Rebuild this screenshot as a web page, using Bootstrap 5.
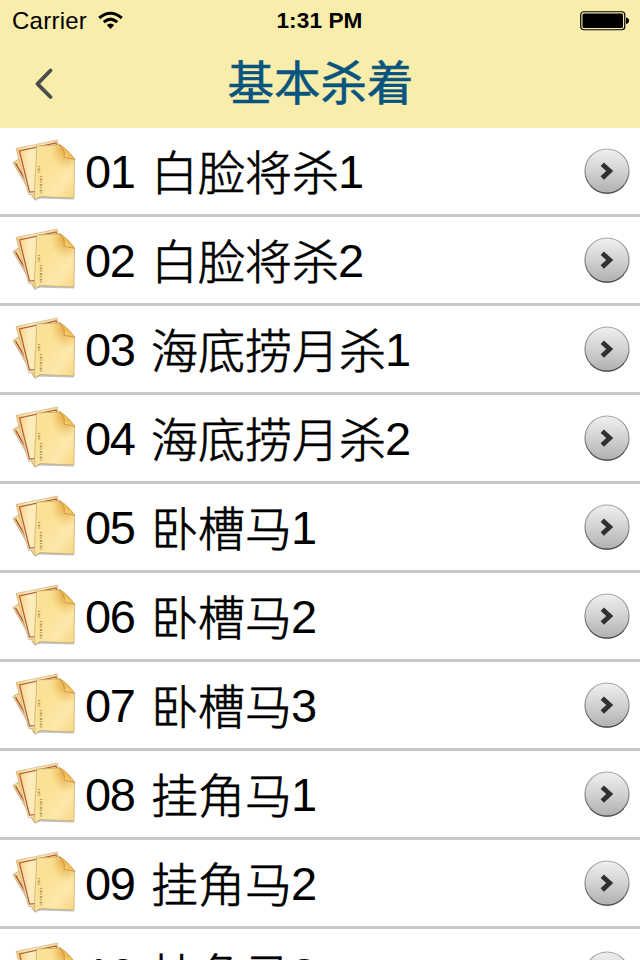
<!DOCTYPE html>
<html lang="zh-CN">
<head>
  <meta charset="UTF-8">
  <meta name="viewport" content="width=device-width, initial-scale=1.0">
  <title>基本杀着</title>
  <link href="https://cdn.jsdelivr.net/npm/bootstrap@5.3.0/dist/css/bootstrap.min.css" rel="stylesheet">
  <style>
    :root {
      --bar-color: #f9edac;
      --title-color: #07547f;
      --line-color: #c8c8c8;
    }

    body {
      font-family: "Liberation Sans", "Noto Sans CJK SC", sans-serif;
      background: #fff;
      color: #000;
      height: 960px;
      overflow: hidden;
    }

    /* Header */
    .top-bar {
      background: var(--bar-color);
      height: 128px;
    }

    .status-bar {
      height: 40px;
      padding: 1px 10px 0 12px;
      font-size: 24px;
      line-height: 39px;
    }

    .carrier-name {
      letter-spacing: .25px;
    }

    .clock {
      margin-right: 3px;
      font-size: 22.6px;
      line-height: 40px;
      letter-spacing: .1px;
    }

    .title-bar {
      height: 88px;
    }

    .page-title {
      padding-left: 1px;
      font-size: 46.5px;
      font-weight: 400;
      line-height: 92px;
      color: var(--title-color);
      -webkit-text-stroke: .6px var(--title-color);
    }

    .side-cell {
      width: 140px;
    }

    .back-btn {
      padding-left: 34px;
    }

    /* List */
    .lesson-list > .lesson {
      height: 89px;
      padding: 0 10px 0 11px;
      border: 0;
      border-bottom: 3px solid var(--line-color);
      color: #000;
      background: #fff;
    }

    .lesson-name {
      margin-left: 8px;
      padding-top: 2px;
      font-size: 47px;
      line-height: 84px;
      white-space: pre;
      word-spacing: 3.5px;
    }

    .lesson-no {
      letter-spacing: -1.4px;
    }

    .lesson-han {
      font-weight: 300;
      line-height: 1;
      vertical-align: -2px;
      -webkit-text-stroke: .7px #000;
    }

    .lesson-end {
      margin-left: -1px;
    }
  </style>
</head>

<body>
  <!-- Shared icons -->
  <svg width="0" height="0" class="position-absolute" aria-hidden="true">
    <defs>
      <linearGradient id="paperFill" x1="0" y1="0" x2="1" y2="1">
        <stop offset="0" stop-color="#f9e19a"/>
        <stop offset=".35" stop-color="#fbe193"/>
        <stop offset=".7" stop-color="#fde8ac"/>
        <stop offset="1" stop-color="#f8d47e"/>
      </linearGradient>
      <linearGradient id="edgeFill" x1="0" y1="0" x2="1" y2="0">
        <stop offset="0" stop-color="#f6ca74"/>
        <stop offset=".3" stop-color="#fdedbd"/>
        <stop offset="1" stop-color="#f6d788"/>
      </linearGradient>
      <linearGradient id="foldShade" x1="0" y1="1" x2="1" y2="0">
        <stop offset="0" stop-color="#fff0b4"/>
        <stop offset=".5" stop-color="#f2bd50"/>
        <stop offset="1" stop-color="#cf8424"/>
      </linearGradient>
      <radialGradient id="cornerShade" cx=".8" cy=".06" r=".42">
        <stop offset="0" stop-color="#d0851c" stop-opacity=".85"/>
        <stop offset="1" stop-color="#eebb50" stop-opacity="0"/>
      </radialGradient>
      <linearGradient id="buttonFill" x1="0" y1="0" x2="0" y2="1">
        <stop offset="0" stop-color="#f0f0f0"/>
        <stop offset=".5" stop-color="#d2d2d2"/>
        <stop offset="1" stop-color="#b0b0b0"/>
      </linearGradient>
      <linearGradient id="buttonRim" x1="0" y1="0" x2="0" y2="1">
        <stop offset="0" stop-color="#a5a5a5"/>
        <stop offset=".6" stop-color="#858585"/>
        <stop offset="1" stop-color="#444"/>
      </linearGradient>
    </defs>
    <symbol id="papers" viewBox="0 0 66 64">
      <path d="M3 24 24 62 29 59 20 16Z" fill="#77777a" opacity=".35"/>
      <path d="M2 23.500 8 20 28 57 23 60Z" fill="#f8dc8d" stroke="#a99a80" stroke-width=".7"/>
      <path d="M4.500 24 16 44" stroke="#a84535" stroke-width="1.300" fill="none"/>
      <path d="M5 9.500 46.500 1 52 52 17.500 55.500Z" fill="url(#edgeFill)" stroke="#c9b28c" stroke-width=".7"/>
      <path d="M45.500 6 45 4 8.500 12 18.500 53 25 52.500" fill="none" stroke="#b05a40" stroke-width="1.200"/>
      <path d="M24 59.500 63 60.500 63 57 26 55Z" fill="#777" opacity=".45"/>
      <path d="M25.500 7 49 6 63.500 20.500 63 59 29 57.500 24 61C22.500 44 26 25 25.500 7Z" fill="url(#paperFill)" stroke="#c0a868" stroke-width=".7"/>
      <path d="M25.500 7 49 6 63.500 20.500 63 59 29 57.500 24 61C22.500 44 26 25 25.500 7Z" fill="url(#cornerShade)"/>
      <path d="M48 5.500C54 8 60 15 64 20.500L53 18C54.500 13 52 9 48 5.500Z" fill="url(#foldShade)" stroke="#b87b27" stroke-width=".6"/>
      <path d="M28 27v7m2 3v19" fill="none" stroke="#907a45" stroke-width="2.400" stroke-dasharray="1 1.500 2 1" opacity=".65"/>
    </symbol>
    <symbol id="more" viewBox="0 0 46 48">
      <circle cx="23" cy="24" r="22" fill="url(#buttonFill)" stroke="url(#buttonRim)" stroke-width="1.200"/>
      <path d="M6 38.500A22.300 22.300 0 0 0 40 38.500" fill="none" stroke="#4c4c4c" stroke-width=".9"/>
      <path d="M18.300 17.300 25.700 24 18.300 31" fill="none" stroke="#303032" stroke-width="4.800" stroke-linejoin="miter"/>
    </symbol>
  </svg>

  <header class="top-bar">
    <div class="status-bar d-flex justify-content-between">
      <div class="side-cell d-flex align-items-center">
        <span class="carrier-name">Carrier</span>
        <svg class="ms-2 flex-shrink-0" width="28" height="20" viewBox="0 0 28 20">
          <g fill="none" stroke="#000" stroke-width="3">
            <path d="M4.200 7Q15.500 -2.600 26.800 7"/>
            <path d="M8.800 11.200Q15.500 5 22.200 11.200"/>
          </g>
          <path d="M11.800 14Q15.500 11 19.200 14L15.500 18Z"/>
        </svg>
      </div>
      <strong class="clock">1:31 PM</strong>
      <div class="side-cell d-flex align-items-center justify-content-end">
        <svg width="50" height="20" viewBox="0 0 50 20">
          <rect x=".75" y=".75" width="44" height="18" rx="3" fill="none" stroke="#000" stroke-width="1.200"/>
          <rect x="2.500" y="2.500" width="40.500" height="14.500" rx="1.500"/>
          <path d="M46 6.500Q49 7 49 9.750T46 13Z"/>
        </svg>
      </div>
    </div>
    <div class="title-bar d-flex align-items-center justify-content-between">
      <a href="#" class="side-cell back-btn" aria-label="Back">
        <svg class="d-block" width="20" height="32" viewBox="0 0 20 32">
          <path d="M16.500 2.500 3.500 15.800 16.500 29" fill="none" stroke="#4c4c4c" stroke-width="3.800" stroke-linecap="round" stroke-linejoin="round"/>
        </svg>
      </a>
      <h1 class="page-title mb-0">基本杀着</h1>
      <div class="side-cell"></div>
    </div>
  </header>

  <main class="list-group list-group-flush lesson-list">
    <a href="#" class="list-group-item lesson d-flex align-items-center">
      <svg width="66" height="64"><use href="#papers"/></svg>
      <span class="lesson-name"><span class="lesson-no">01</span> <span class="lesson-han">白脸将杀</span><span class="lesson-end">1</span></span>
      <svg class="ms-auto" width="46" height="48"><use href="#more"/></svg>
    </a>
    <a href="#" class="list-group-item lesson d-flex align-items-center">
      <svg width="66" height="64"><use href="#papers"/></svg>
      <span class="lesson-name"><span class="lesson-no">02</span> <span class="lesson-han">白脸将杀</span><span class="lesson-end">2</span></span>
      <svg class="ms-auto" width="46" height="48"><use href="#more"/></svg>
    </a>
    <a href="#" class="list-group-item lesson d-flex align-items-center">
      <svg width="66" height="64"><use href="#papers"/></svg>
      <span class="lesson-name"><span class="lesson-no">03</span> <span class="lesson-han">海底捞月杀</span><span class="lesson-end">1</span></span>
      <svg class="ms-auto" width="46" height="48"><use href="#more"/></svg>
    </a>
    <a href="#" class="list-group-item lesson d-flex align-items-center">
      <svg width="66" height="64"><use href="#papers"/></svg>
      <span class="lesson-name"><span class="lesson-no">04</span> <span class="lesson-han">海底捞月杀</span><span class="lesson-end">2</span></span>
      <svg class="ms-auto" width="46" height="48"><use href="#more"/></svg>
    </a>
    <a href="#" class="list-group-item lesson d-flex align-items-center">
      <svg width="66" height="64"><use href="#papers"/></svg>
      <span class="lesson-name"><span class="lesson-no">05</span> <span class="lesson-han">卧槽马</span><span class="lesson-end">1</span></span>
      <svg class="ms-auto" width="46" height="48"><use href="#more"/></svg>
    </a>
    <a href="#" class="list-group-item lesson d-flex align-items-center">
      <svg width="66" height="64"><use href="#papers"/></svg>
      <span class="lesson-name"><span class="lesson-no">06</span> <span class="lesson-han">卧槽马</span><span class="lesson-end">2</span></span>
      <svg class="ms-auto" width="46" height="48"><use href="#more"/></svg>
    </a>
    <a href="#" class="list-group-item lesson d-flex align-items-center">
      <svg width="66" height="64"><use href="#papers"/></svg>
      <span class="lesson-name"><span class="lesson-no">07</span> <span class="lesson-han">卧槽马</span><span class="lesson-end">3</span></span>
      <svg class="ms-auto" width="46" height="48"><use href="#more"/></svg>
    </a>
    <a href="#" class="list-group-item lesson d-flex align-items-center">
      <svg width="66" height="64"><use href="#papers"/></svg>
      <span class="lesson-name"><span class="lesson-no">08</span> <span class="lesson-han">挂角马</span><span class="lesson-end">1</span></span>
      <svg class="ms-auto" width="46" height="48"><use href="#more"/></svg>
    </a>
    <a href="#" class="list-group-item lesson d-flex align-items-center">
      <svg width="66" height="64"><use href="#papers"/></svg>
      <span class="lesson-name"><span class="lesson-no">09</span> <span class="lesson-han">挂角马</span><span class="lesson-end">2</span></span>
      <svg class="ms-auto" width="46" height="48"><use href="#more"/></svg>
    </a>
    <a href="#" class="list-group-item lesson d-flex align-items-center">
      <svg width="66" height="64"><use href="#papers"/></svg>
      <span class="lesson-name"><span class="lesson-no">10</span> <span class="lesson-han">挂角马</span><span class="lesson-end">3</span></span>
      <svg class="ms-auto" width="46" height="48"><use href="#more"/></svg>
    </a>
  </main>

  <script src="https://cdn.jsdelivr.net/npm/bootstrap@5.3.0/dist/js/bootstrap.bundle.min.js"></script>
</body>
</html>
